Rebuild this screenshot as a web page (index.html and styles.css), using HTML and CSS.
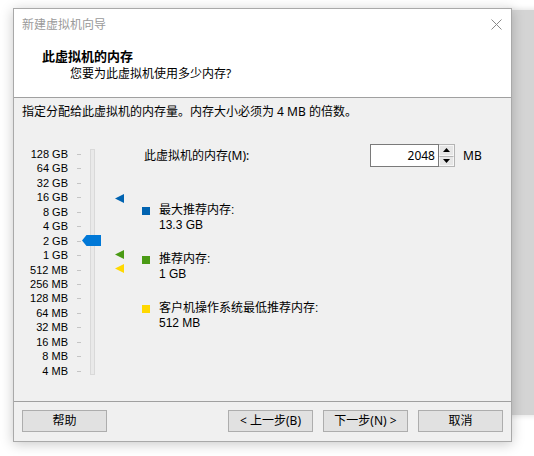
FILE: index.html
```html
<!DOCTYPE html>
<html lang="zh-CN">
<head>
<meta charset="utf-8">
<title>新建虚拟机向导</title>
<link rel="stylesheet" href="styles.css">
</head>
<body>
<div class="desktop">
  <div class="behind"></div>
  <div class="dialog">
    <div class="titlebar">
      <span class="title">新建虚拟机向导</span>
      <svg class="close" width="11" height="11" viewBox="0 0 11 11"><path d="M0.5 0.5 L10.5 10.5 M10.5 0.5 L0.5 10.5" stroke="#8a8a8a" stroke-width="1" fill="none"/></svg>
    </div>
    <div class="header">
      <div class="h-title">此虚拟机的内存</div>
      <div class="h-sub">您要为此虚拟机使用多少内存?</div>
    </div>
    <div class="content">
      <div class="intro">指定分配给此虚拟机的内存量。内存大小必须为 4 MB 的倍数。</div>
      <div class="main">
        <div class="slider">
          <div class="labels">
            <div class="lbl">128 GB</div>
            <div class="lbl">64 GB</div>
            <div class="lbl">32 GB</div>
            <div class="lbl">16 GB</div>
            <div class="lbl">8 GB</div>
            <div class="lbl">4 GB</div>
            <div class="lbl">2 GB</div>
            <div class="lbl">1 GB</div>
            <div class="lbl">512 MB</div>
            <div class="lbl">256 MB</div>
            <div class="lbl">128 MB</div>
            <div class="lbl">64 MB</div>
            <div class="lbl">32 MB</div>
            <div class="lbl">16 MB</div>
            <div class="lbl">8 MB</div>
            <div class="lbl">4 MB</div>
          </div>
          <div class="track"></div>
          <svg class="thumb" width="19" height="11" viewBox="0 0 19 11"><path d="M0 5.5 L4.5 0 H19 V11 H4.5 Z" fill="#0078d7"/></svg>
          <svg class="mark mark-max" width="9" height="9" viewBox="0 0 9 9"><path d="M0 4.5 L9 0 V9 Z" fill="#0063b1"/></svg>
          <svg class="mark mark-rec" width="9" height="9" viewBox="0 0 9 9"><path d="M0 4.5 L9 0 V9 Z" fill="#4a9a14"/></svg>
          <svg class="mark mark-min" width="9" height="9" viewBox="0 0 9 9"><path d="M0 4.5 L9 0 V9 Z" fill="#ffd800"/></svg>
        </div>
        <div class="panel">
          <div class="mem-row">
            <span class="mem-label">此虚拟机的内存(M):</span>
            <div class="spin">
              <div class="spin-input">2048</div>
              <div class="spin-btns">
                <div class="spin-btn"><svg width="7" height="4" viewBox="0 0 7 4"><path d="M0 4 L3.5 0 L7 4 Z" fill="#000"/></svg></div>
                <div class="spin-btn"><svg width="7" height="4" viewBox="0 0 7 4"><path d="M0 0 L3.5 4 L7 0 Z" fill="#000"/></svg></div>
              </div>
            </div>
            <span class="unit">MB</span>
          </div>
          <div class="legend">
            <div class="item">
              <span class="sq sq-max"></span>
              <div class="item-text"><div>最大推荐内存:</div><div>13.3 GB</div></div>
            </div>
            <div class="item">
              <span class="sq sq-rec"></span>
              <div class="item-text"><div>推荐内存:</div><div>1 GB</div></div>
            </div>
            <div class="item">
              <span class="sq sq-min"></span>
              <div class="item-text"><div>客户机操作系统最低推荐内存:</div><div>512 MB</div></div>
            </div>
          </div>
        </div>
      </div>
    </div>
    <div class="footer">
      <div class="btn">帮助</div>
      <div class="btn-group">
        <div class="btn">&lt; 上一步(B)</div>
        <div class="btn">下一步(N) &gt;</div>
        <div class="btn">取消</div>
      </div>
    </div>
  </div>
</div>
</body>
</html>
```
FILE: styles.css
```css
* { box-sizing: border-box; }
html, body { margin: 0; padding: 0; background: #ffffff; }
body {
  font-family: "Segoe UI", "Noto Sans", "Noto Sans CJK SC", sans-serif;
  font-size: 12px;
  color: #000;
}
.desktop {
  position: relative;
  width: 534px;
  height: 456px;
  overflow: hidden;
  background: #ffffff;
}
.behind {
  position: absolute;
  left: 505px;
  top: 10px;
  width: 40px;
  height: 405px;
  background: #d4d4d4;
  box-shadow: 0 0 6px rgba(0,0,0,0.15);
}
.dialog {
  position: absolute;
  left: 13px;
  top: 8px;
  width: 499px;
  height: 434px;
  border: 1px solid #a9a9a9;
  background: #f0f0f0;
  box-shadow: 0 2px 12px rgba(0,0,0,0.22);
  display: flex;
  flex-direction: column;
}
.titlebar {
  height: 30px;
  background: #ffffff;
  display: flex;
  align-items: center;
  justify-content: space-between;
  padding: 0 9px 0 8px;
}
.title {
  color: #9a9a9a;
  line-height: 16px;
  padding-top: 1px;
}
.close { display: block; margin-top: 1px; }
.header {
  background: #ffffff;
  height: 59px;
  border-bottom: 1px solid #a0a0a0;
  padding-top: 8px;
}
.h-title {
  font-weight: bold;
  font-size: 13px;
  line-height: 18px;
  padding-left: 28px;
}
.h-sub {
  line-height: 18px;
  padding-left: 56px;
}
.content {
  flex: 1;
  padding: 6px 8px 0 8px;
}
.intro { line-height: 16px; }
.main {
  display: flex;
  margin-top: 24px;
}
.slider {
  position: relative;
  width: 120px;
  height: 235px;
  flex: none;
}
.labels {
  width: 46px;
  padding-top: 3px;
}
.lbl {
  position: relative;
  height: 14.45px;
  line-height: 14.45px;
  font-family: "Liberation Sans", "Noto Sans", sans-serif;
  font-size: 11px;
  text-align: right;
  white-space: nowrap;
}
.lbl::after {
  content: "";
  position: absolute;
  left: 55px;
  top: 7px;
  width: 4px;
  height: 1px;
  background: #c4c4c4;
}
.track {
  position: absolute;
  left: 68px;
  top: 5px;
  width: 5px;
  height: 226px;
  border: 1px solid #d9d9d9;
  background: #e9e9e9;
}
.thumb { position: absolute; left: 60px; top: 91px; display: block; }
.mark { position: absolute; left: 93px; display: block; }
.mark-max { top: 50px; }
.mark-rec { top: 106px; }
.mark-min { top: 120px; }
.panel {
  flex: 1;
  display: flex;
  flex-direction: column;
}
.mem-row {
  display: flex;
  align-items: center;
  height: 23px;
}
.mem-label { flex: 1; padding-left: 2px; line-height: 16px; }
.spin { display: flex; height: 23px; }
.spin-input {
  width: 69px;
  height: 23px;
  background: #ffffff;
  border: 1px solid #7a7a7a;
  text-align: right;
  padding-right: 3px;
  line-height: 21px;
}
.spin-btns {
  width: 16px;
  display: flex;
  flex-direction: column;
  border: 1px solid #b4b4b4;
  border-left: none;
}
.spin-btn {
  flex: 1;
  display: flex;
  align-items: center;
  justify-content: center;
  background: #e6e6e6;
  border: 1px solid #f6f6f6;
}
.spin-btn + .spin-btn { border-top: 1px solid #b4b4b4; }
.spin-btn svg { display: block; }
.unit { width: 40px; margin-left: 8px; line-height: 16px; }
.legend {
  margin-top: 36px;
  display: flex;
  flex-direction: column;
  gap: 19px;
}
.item { display: flex; align-items: flex-start; }
.sq {
  width: 8px;
  height: 8px;
  margin-top: 3.5px;
  margin-right: 9px;
  flex: none;
}
.sq-max { background: #0063b1; }
.sq-rec { background: #4a9a14; }
.sq-min { background: #ffd800; }
.item-text {
  font-family: "Liberation Sans", "Noto Sans CJK SC", sans-serif;
}
.item-text div { line-height: 15px; }
.footer {
  height: 40px;
  border-top: 1px solid #a0a0a0;
  display: flex;
  justify-content: space-between;
  padding: 8px 8px 0 8px;
}
.btn-group { display: flex; gap: 10px; }
.btn {
  width: 85px;
  height: 22px;
  background: #e1e1e1;
  border: 1px solid #adadad;
  text-align: center;
  line-height: 20px;
}
```
